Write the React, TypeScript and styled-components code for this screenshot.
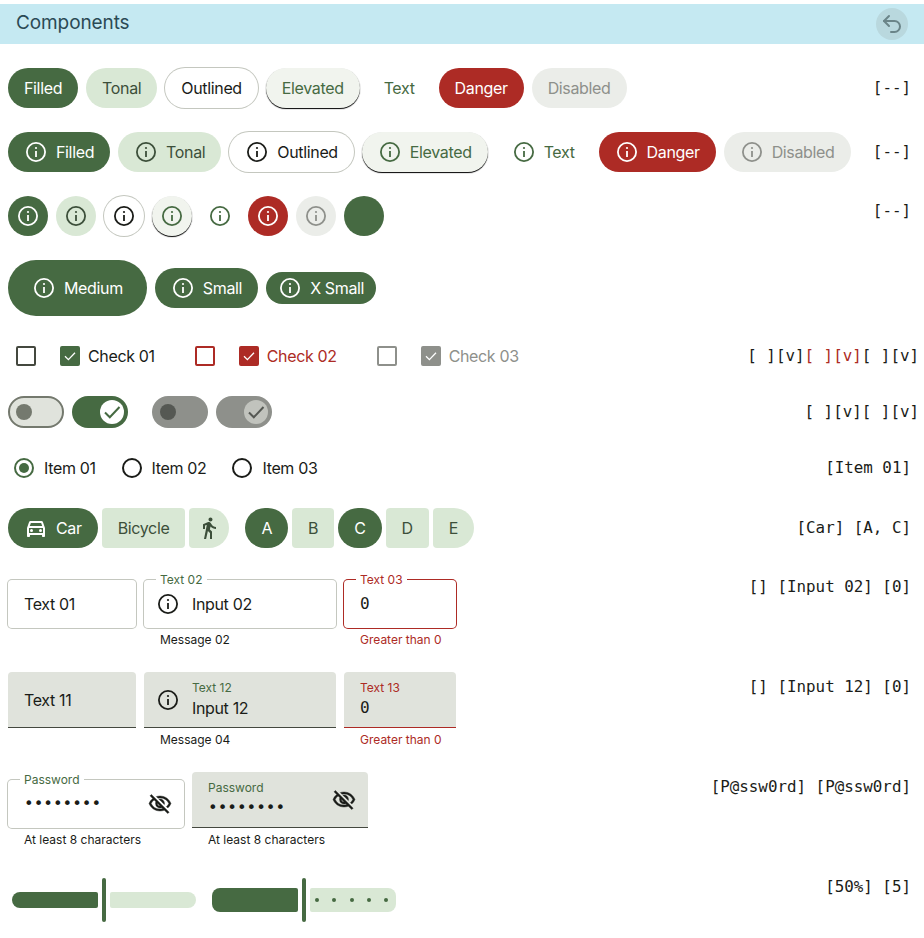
import React from 'react'
import styled, { createGlobalStyle, css } from 'styled-components'
import { Undo2 } from 'lucide-react'
import { MdDirectionsWalk, MdOutlineDirectionsCar, MdOutlineVisibilityOff } from 'react-icons/md'

const GREEN = '#466a42'
const TONAL = '#d9e8d5'
const RED = '#ad2b25'
const INK = '#1a1c18'
const MUTED = '#8e908b'
const OUTLINE = '#c4c7bf'
const FILL = '#e0e3dc'

type Variant = 'filled' | 'tonal' | 'outlined' | 'elevated' | 'text' | 'danger' | 'disabled'
type Size = 'xs' | 's' | 'm'

const GlobalStyle = createGlobalStyle`
  html, body { margin: 0; padding: 0; background: #fff; }
  body { font-family: Inter, "Liberation Sans", sans-serif; font-size: 16px; letter-spacing: -0.35px; color: ${INK}; }
`

const Header = styled.header`
  margin-top: 4px;
  height: 40px;
  background: #c5e9f2;
  display: flex;
  align-items: center;
  justify-content: space-between;
  padding: 0 16px;
  h1 {
    margin: 0;
    padding-bottom: 3px;
    font-size: 19px;
    font-weight: 400;
    letter-spacing: -0.1px;
    color: #2b4a55;
  }
`

const BackButton = styled.button`
  width: 32px;
  height: 32px;
  border: 0;
  padding: 0;
  border-radius: 50%;
  background: #b9d8de;
  color: #6b8589;
  display: flex;
  align-items: center;
  justify-content: center;
`

const Main = styled.main`
  display: flex;
  flex-direction: column;
  gap: 24px;
  padding: 24px 5px 10px 8px;
`

const Row = styled.section`
  display: flex;
  justify-content: space-between;
  align-items: center;
`

const Cluster = styled.div<{ $gap?: number }>`
  display: flex;
  align-items: center;
  gap: ${p => p.$gap ?? 8}px;
`

const TopCluster = styled(Cluster)`
  align-items: flex-start;
`

const Output = styled.code<{ $top?: boolean; $flush?: boolean }>`
  font-family: "DejaVu Sans Mono", "Liberation Mono", monospace;
  font-size: 15.85px;
  letter-spacing: 0;
  white-space: pre;
  color: ${INK};
  padding-right: ${p => (p.$flush ? 0 : 8)}px;
  padding-bottom: 2px;
  ${p => p.$top && css`
    align-self: flex-start;
    line-height: 30px;
  `}
  span { color: ${RED}; }
`

const variants = {
  filled: css`background: ${GREEN}; color: #fff;`,
  tonal: css`background: ${TONAL}; color: #3c4f3a;`,
  outlined: css`background: #fff; color: ${INK}; box-shadow: 0 0 0 1px ${OUTLINE};`,
  elevated: css`background: #f1f4ee; color: ${GREEN}; box-shadow: 0 1px 1px #000;`,
  text: css`background: transparent; color: ${GREEN};`,
  danger: css`background: ${RED}; color: #fff;`,
  disabled: css`background: #ebede9; color: ${MUTED};`,
}

const sizes = {
  xs: css`height: 32px; padding: 0 12px; border-radius: 16px;`,
  s: css`height: 40px; padding: 0 16px; border-radius: 20px;`,
  m: css`height: 56px; padding: 0 24px; border-radius: 28px;`,
}

const Button = styled.button<{ $variant?: Variant; $size?: Size }>`
  display: inline-flex;
  align-items: center;
  gap: 8px;
  border: 0;
  font: inherit;
  letter-spacing: inherit;
  ${p => sizes[p.$size ?? 's']}
  ${p => variants[p.$variant ?? 'filled']}
`

const IconButton = styled(Button)`
  width: 40px;
  padding: 0;
  justify-content: center;
`

const InfoIcon = () => (
  <svg width="24" height="24" viewBox="0 0 24 24" fill="none" stroke="currentColor">
    <circle cx="12" cy="12" r="9.1" strokeWidth="1.8" />
    <path d="M12 11v6" strokeWidth="1.8" />
    <circle cx="12" cy="8" r="1.1" fill="currentColor" stroke="none" />
  </svg>
)

const Box = styled.span<{ $color: string; $checked?: boolean }>`
  width: 20px;
  height: 20px;
  box-sizing: border-box;
  border-radius: 2px;
  border: 2px solid ${p => p.$color};
  background: ${p => (p.$checked ? p.$color : 'transparent')};
  color: #fff;
  display: flex;
  align-items: center;
  justify-content: center;
`

const CheckSlot = styled.span`
  width: 36px;
  height: 32px;
  display: flex;
  align-items: center;
  justify-content: center;
`

const CheckLabel = styled.span<{ $color: string }>`
  color: ${p => p.$color};
`

const CheckItem = styled.label`
  display: flex;
  align-items: center;
`

const CheckGroup = ({ color, fill, text, label }: { color: string; fill: string; text: string; label: string }) => (
  <Cluster>
    <CheckSlot><Box $color={color} /></CheckSlot>
    <CheckItem>
      <CheckSlot>
        <Box $color={fill} $checked>
          <svg width="16" height="16" viewBox="0 0 16 16" fill="none" stroke="currentColor" strokeWidth="1.3">
            <path d="M3 8.2 6.4 11.6 13 4.8" />
          </svg>
        </Box>
      </CheckSlot>
      <CheckLabel $color={text}>{label}</CheckLabel>
    </CheckItem>
  </Cluster>
)

const Track = styled.span<{ $on?: boolean; $disabled?: boolean }>`
  width: 56px;
  height: 32px;
  box-sizing: border-box;
  border-radius: 16px;
  display: flex;
  align-items: center;
  justify-content: ${p => (p.$on ? 'flex-end' : 'flex-start')};
  padding: 0 4px;
  background: ${p => (p.$disabled ? '#8e908b' : p.$on ? GREEN : FILL)};
  ${p => !p.$on && !p.$disabled && css`border: 2px solid #74796e; padding: 0 6px;`}
  ${p => !p.$on && p.$disabled && css`padding: 0 8px;`}
`

const Thumb = styled.span<{ $on?: boolean; $disabled?: boolean }>`
  width: ${p => (p.$on ? 24 : 16)}px;
  height: ${p => (p.$on ? 24 : 16)}px;
  border-radius: 50%;
  display: flex;
  align-items: center;
  justify-content: center;
  color: ${p => (p.$disabled ? '#555853' : GREEN)};
  background: ${p => (p.$on ? (p.$disabled ? '#c1c3bd' : '#fff') : p.$disabled ? '#555853' : '#74796e')};
`

const Switch = ({ on, disabled }: { on?: boolean; disabled?: boolean }) => (
  <Track $on={on} $disabled={disabled}>
    <Thumb $on={on} $disabled={disabled}>
      {on && (
        <svg width="24" height="24" viewBox="0 0 24 24" fill="none" stroke="currentColor" strokeWidth="2">
          <path d="M5 12.5 9.8 17.3 19.5 7" />
        </svg>
      )}
    </Thumb>
  </Track>
)

const RadioItem = styled.label`
  display: flex;
  align-items: center;
  gap: 4px;
  height: 32px;
`

const RadioSlot = styled.span`
  width: 32px;
  height: 32px;
  display: flex;
  align-items: center;
  justify-content: center;
`

const RadioRing = styled.span<{ $on?: boolean }>`
  width: 20px;
  height: 20px;
  box-sizing: border-box;
  border-radius: 50%;
  border: 2px solid ${p => (p.$on ? GREEN : INK)};
  display: flex;
  align-items: center;
  justify-content: center;
  &::after {
    content: '';
    width: 10px;
    height: 10px;
    border-radius: 50%;
    background: ${p => (p.$on ? GREEN : 'transparent')};
  }
`

const Segment = styled.button<{ $on?: boolean; $left?: boolean; $right?: boolean; $icon?: boolean }>`
  display: inline-flex;
  align-items: center;
  justify-content: center;
  gap: 8px;
  height: 40px;
  border: 0;
  font: inherit;
  letter-spacing: inherit;
  padding: 0 ${p => (p.$icon ? 8 : 16)}px;
  background: ${p => (p.$on ? GREEN : TONAL)};
  color: ${p => (p.$on ? '#fff' : '#3c4f3a')};
  border-radius: ${p => (p.$on || p.$left ? 20 : 4)}px ${p => (p.$on || p.$right ? 20 : 4)}px ${p => (p.$on || p.$right ? 20 : 4)}px ${p => (p.$on || p.$left ? 20 : 4)}px;
`

const FieldColumn = styled.div<{ $width: number }>`
  width: ${p => p.$width}px;
`

const FieldBox = styled.div<{ $filled?: boolean; $error?: boolean }>`
  position: relative;
  box-sizing: border-box;
  display: flex;
  align-items: center;
  gap: 12px;
  padding: 0 16px;
  ${p => (p.$filled
    ? css`
        height: 56px;
        background: ${FILL};
        border-radius: 4px 4px 0 0;
        border-bottom: 1px solid ${p.$error ? RED : '#44483f'};
      `
    : css`
        margin-top: 8px;
        height: 48px;
        border-radius: 4px;
        background: #fff;
        box-shadow: 0 0 0 1px ${p.$error ? RED : OUTLINE};
      `)}
`

const FieldIcon = styled.span`
  display: flex;
  margin-left: -4px;
`

const EyeIcon = styled.span`
  display: flex;
  margin-right: -4px;
  svg { stroke: currentColor; stroke-width: 0.4px; }
  svg path[fill="none"] { stroke: none; }
`

const Floating = styled.span<{ $error?: boolean }>`
  position: absolute;
  left: 12px;
  top: -8px;
  padding: 0 4px;
  background: #fff;
  font-size: 12px;
  line-height: 16px;
  letter-spacing: 0;
  color: ${p => (p.$error ? RED : GREEN)};
`

const Stack = styled.div`
  display: flex;
  flex-direction: column;
  flex: 1;
  gap: 1px;
`

const SmallLabel = styled.span<{ $error?: boolean }>`
  font-size: 12px;
  line-height: 16px;
  letter-spacing: 0;
  color: ${p => (p.$error ? RED : GREEN)};
`

const Value = styled.span<{ $mono?: boolean }>`
  line-height: 22px;
  ${p => p.$mono && css`
    font-family: "DejaVu Sans Mono", "Liberation Mono", monospace;
    letter-spacing: 0;
  `}
`

const Dots = styled(Value)`
  font-family: "DejaVu Sans Mono", "Liberation Mono", monospace;
  letter-spacing: 0;
  flex: 1;
`

const Helper = styled.div<{ $error?: boolean }>`
  box-sizing: border-box;
  height: 20px;
  font-size: 12px;
  line-height: 16px;
  letter-spacing: 0;
  padding: 4px 0 0 16px;
  color: ${p => (p.$error ? RED : INK)};
`

const Slider = styled.div`
  width: 192px;
  height: 56px;
  box-sizing: border-box;
  padding: 0 4px;
  display: flex;
  align-items: center;
  gap: 4px;
`

const Fill = styled.div<{ $h: number; $r: number }>`
  flex: 0 0 86px;
  height: ${p => p.$h}px;
  background: ${GREEN};
  border-radius: ${p => p.$r}px 2px 2px ${p => p.$r}px;
`

const Rest = styled.div<{ $h: number; $r: number }>`
  flex: 0 0 86px;
  box-sizing: border-box;
  height: ${p => p.$h}px;
  background: ${TONAL};
  border-radius: 2px ${p => p.$r}px ${p => p.$r}px 2px;
  display: flex;
  align-items: center;
  justify-content: space-between;
  padding: 0 8px 0 5px;
  i {
    width: 4px;
    height: 4px;
    border-radius: 50%;
    background: ${GREEN};
  }
`

const Handle = styled.div`
  width: 4px;
  height: 44px;
  border-radius: 2px;
  background: ${GREEN};
`

const labels: [Variant, string][] = [
  ['filled', 'Filled'],
  ['tonal', 'Tonal'],
  ['outlined', 'Outlined'],
  ['elevated', 'Elevated'],
  ['text', 'Text'],
  ['danger', 'Danger'],
  ['disabled', 'Disabled'],
]

export default function App() {
  return (
    <>
      <GlobalStyle />
      <Header>
        <h1>Components</h1>
        <BackButton><Undo2 size={24} strokeWidth={2} /></BackButton>
      </Header>
      <Main>
        <Row>
          <Cluster>
            {labels.map(([v, t]) => <Button key={v} $variant={v}>{t}</Button>)}
          </Cluster>
          <Output>[--]</Output>
        </Row>

        <Row>
          <Cluster>
            {labels.map(([v, t]) => <Button key={v} $variant={v}><InfoIcon />{t}</Button>)}
          </Cluster>
          <Output>[--]</Output>
        </Row>

        <Row>
          <Cluster>
            {labels.map(([v]) => <IconButton key={v} $variant={v}><InfoIcon /></IconButton>)}
            <IconButton $variant="filled" />
          </Cluster>
          <Output $top>[--]</Output>
        </Row>

        <Row>
          <Cluster>
            <Button $size="m"><InfoIcon />Medium</Button>
            <Button $size="s"><InfoIcon />Small</Button>
            <Button $size="xs"><InfoIcon />X Small</Button>
          </Cluster>
        </Row>

        <Row>
          <Cluster $gap={32}>
            <CheckGroup color="#44483f" fill={GREEN} text={INK} label="Check 01" />
            <CheckGroup color={RED} fill={RED} text={RED} label="Check 02" />
            <CheckGroup color={MUTED} fill={MUTED} text={MUTED} label="Check 03" />
          </Cluster>
          <Output $flush>[ ][v]<span>[ ][v]</span>[ ][v]</Output>
        </Row>

        <Row>
          <Cluster $gap={24}>
            <Cluster>
              <Switch />
              <Switch on />
            </Cluster>
            <Cluster>
              <Switch disabled />
              <Switch on disabled />
            </Cluster>
          </Cluster>
          <Output $flush>[ ][v][ ][v]</Output>
        </Row>

        <Row>
          <Cluster $gap={20}>
            {['Item 01', 'Item 02', 'Item 03'].map((t, i) => (
              <RadioItem key={t}>
                <RadioSlot><RadioRing $on={i === 0} /></RadioSlot>
                {t}
              </RadioItem>
            ))}
          </Cluster>
          <Output>[Item 01]</Output>
        </Row>

        <Row>
          <Cluster $gap={16}>
            <Cluster $gap={4}>
              <Segment $on $left><MdOutlineDirectionsCar size={24} />Car</Segment>
              <Segment>Bicycle</Segment>
              <Segment $right $icon><MdDirectionsWalk size={24} /></Segment>
            </Cluster>
            <Cluster $gap={4}>
              <Segment $on>A</Segment>
              <Segment>B</Segment>
              <Segment $on>C</Segment>
              <Segment>D</Segment>
              <Segment $right>E</Segment>
            </Cluster>
          </Cluster>
          <Output>[Car] [A, C]</Output>
        </Row>

        <Row>
          <TopCluster>
            <FieldColumn $width={128}>
              <FieldBox>Text 01</FieldBox>
            </FieldColumn>
            <FieldColumn $width={192}>
              <FieldBox>
                <Floating>Text 02</Floating>
                <FieldIcon><InfoIcon /></FieldIcon>
                Input 02
              </FieldBox>
              <Helper>Message 02</Helper>
            </FieldColumn>
            <FieldColumn $width={112}>
              <FieldBox $error>
                <Floating $error>Text 03</Floating>
                <Value $mono>0</Value>
              </FieldBox>
              <Helper $error>Greater than 0</Helper>
            </FieldColumn>
          </TopCluster>
          <Output $top>[] [Input 02] [0]</Output>
        </Row>

        <Row>
          <TopCluster>
            <FieldColumn $width={128}>
              <FieldBox $filled>Text 11</FieldBox>
            </FieldColumn>
            <FieldColumn $width={192}>
              <FieldBox $filled>
                <FieldIcon><InfoIcon /></FieldIcon>
                <Stack>
                  <SmallLabel>Text 12</SmallLabel>
                  <Value>Input 12</Value>
                </Stack>
              </FieldBox>
              <Helper>Message 04</Helper>
            </FieldColumn>
            <FieldColumn $width={112}>
              <FieldBox $filled $error>
                <Stack>
                  <SmallLabel $error>Text 13</SmallLabel>
                  <Value $mono>0</Value>
                </Stack>
              </FieldBox>
              <Helper $error>Greater than 0</Helper>
            </FieldColumn>
          </TopCluster>
          <Output $top>[] [Input 12] [0]</Output>
        </Row>

        <Row>
          <TopCluster>
            <FieldColumn $width={176}>
              <FieldBox>
                <Floating>Password</Floating>
                <Dots>••••••••</Dots>
                <EyeIcon><MdOutlineVisibilityOff size={24} /></EyeIcon>
              </FieldBox>
              <Helper>At least 8 characters</Helper>
            </FieldColumn>
            <FieldColumn $width={176}>
              <FieldBox $filled>
                <Stack>
                  <SmallLabel>Password</SmallLabel>
                  <Dots>••••••••</Dots>
                </Stack>
                <EyeIcon><MdOutlineVisibilityOff size={24} /></EyeIcon>
              </FieldBox>
              <Helper>At least 8 characters</Helper>
            </FieldColumn>
          </TopCluster>
          <Output $top>[P@ssw0rd] [P@ssw0rd]</Output>
        </Row>

        <Row>
          <Cluster>
            <Slider>
              <Fill $h={16} $r={8} />
              <Handle />
              <Rest $h={16} $r={8} />
            </Slider>
            <Slider>
              <Fill $h={24} $r={8} />
              <Handle />
              <Rest $h={24} $r={8}>
                <i /><i /><i /><i /><i />
              </Rest>
            </Slider>
          </Cluster>
          <Output $top>[50%] [5]</Output>
        </Row>
      </Main>
    </>
  )
}
